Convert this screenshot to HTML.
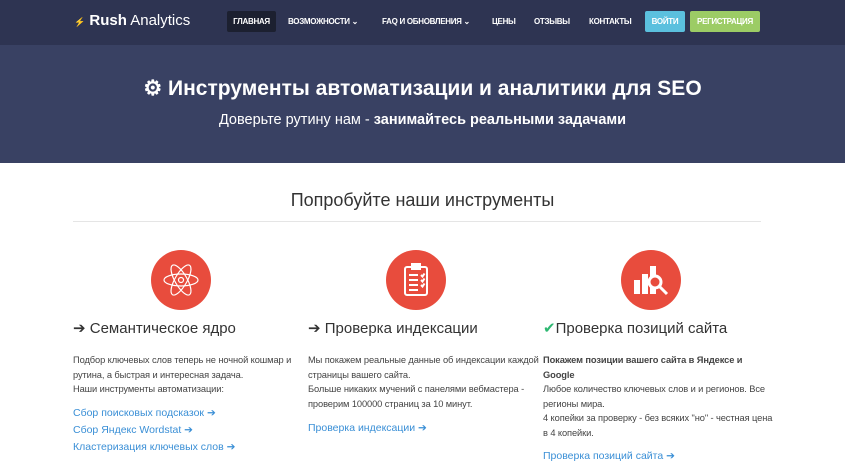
<!DOCTYPE html>
<html><head><meta charset="utf-8"><style>
*{margin:0;padding:0;box-sizing:border-box}
body{width:845px;height:466px;overflow:hidden;background:#fff;font-family:"Liberation Sans",sans-serif;color:#333;position:relative}
.nav{position:absolute;left:0;top:0;width:845px;height:45px;background:#2e3452}
.logo{position:absolute;left:74px;top:12px;color:#fff;font-size:15px}
.ni{position:absolute;top:11px;height:21px;line-height:21px;color:#fff;font-size:8px;font-weight:bold;padding:0 5px;letter-spacing:-0.3px;white-space:nowrap}
.hero{position:absolute;left:0;top:45px;width:845px;height:118px;background:#394163;color:#fff;text-align:center}
.hero h1{position:absolute;top:31px;width:100%;font-size:21px;font-weight:bold}
.hero p{position:absolute;top:67px;width:100%;font-size:14.5px}
.h2{position:absolute;top:190px;width:845px;text-align:center;font-size:18px;color:#333}
.hr{position:absolute;left:73px;top:221px;width:688px;height:1px;background:#e5e5e5}
.circ{position:absolute;top:250px;width:60px;height:60px;border-radius:50%;background:#e84c3d}
.t{position:absolute;top:319px;font-size:15px;color:#333;white-space:nowrap}
.tx{position:absolute;font-size:9.3px;line-height:14.5px;color:#444;width:234px;letter-spacing:-0.1px;white-space:nowrap}
.ln{position:absolute;font-size:10.5px;color:#3a8fd6;white-space:nowrap}
</style></head><body>
<div class="nav">
<div class="logo"><span style="font-size:9px;color:#aaa">⚡</span> <b>Rush</b> Analytics</div>
<div class="ni" style="left:227px;background:#1c2030;border-radius:2px;width:49px;text-align:center">ГЛАВНАЯ</div>
<div class="ni" style="left:283px">ВОЗМОЖНОСТИ ⌄</div>
<div class="ni" style="left:377px">FAQ И ОБНОВЛЕНИЯ ⌄</div>
<div class="ni" style="left:487px">ЦЕНЫ</div>
<div class="ni" style="left:529px">ОТЗЫВЫ</div>
<div class="ni" style="left:584px">КОНТАКТЫ</div>
<div class="ni" style="left:645px;background:#5bc0de;border-radius:2px;width:40px;text-align:center;padding:0">ВОЙТИ</div>
<div class="ni" style="left:690px;background:#9ccc65;border-radius:2px;width:70px;text-align:center;padding:0">РЕГИСТРАЦИЯ</div>
</div>
<div class="hero"><h1>⚙ Инструменты автоматизации и аналитики для SEO</h1>
<p>Доверьте рутину нам - <b>занимайтесь реальными задачами</b></p></div>
<div class="h2">Попробуйте наши инструменты</div>
<div class="hr"></div>

<div class="circ" style="left:151px"><svg width="60" height="60" viewBox="0 0 60 60" fill="none" stroke="#fff" stroke-width="1.2"><ellipse cx="30" cy="30" rx="17" ry="6"/><ellipse cx="30" cy="30" rx="17" ry="6" transform="rotate(60 30 30)"/><ellipse cx="30" cy="30" rx="17" ry="6" transform="rotate(-60 30 30)"/><circle cx="30" cy="30" r="2.5"/></svg></div>
<div class="circ" style="left:386px"><svg width="60" height="60" viewBox="0 0 60 60" fill="none" stroke="#fff" stroke-width="2"><rect x="19" y="17" width="22" height="28" rx="2"/><rect x="26" y="14" width="8" height="5" fill="#fff"/><path d="M23 25h9M23 30h9M23 35h9M23 40h9M35 25l1.5 1.5 2-3M35 30l1.5 1.5 2-3M35 35l1.5 1.5 2-3"/></svg></div>
<div class="circ" style="left:621px"><svg width="60" height="60" viewBox="0 0 60 60"><g fill="#fff"><rect x="13" y="30" width="6" height="14"/><rect x="21" y="24" width="6" height="20"/><rect x="29" y="16" width="6" height="28"/></g><circle cx="34" cy="32" r="6" fill="#e84c3d" stroke="#fff" stroke-width="3"/><path d="M38 36l8 8" stroke="#fff" stroke-width="3"/></svg></div>

<div class="t" style="left:73px">➔ Семантическое ядро</div>
<div class="t" style="left:308px">➔ Проверка индексации</div>
<div class="t" style="left:543px"><span style="color:#2eb872">✔</span>Проверка позиций сайта</div>

<div class="tx" style="left:73px;top:353px">Подбор ключевых слов теперь не ночной кошмар и<br>рутина, а быстрая и интересная задача.<br>Наши инструменты автоматизации:</div>
<div class="ln" style="left:73px;top:407px">Сбор поисковых подсказок ➔</div>
<div class="ln" style="left:73px;top:424px">Сбор Яндекс Wordstat ➔</div>
<div class="ln" style="left:73px;top:441px">Кластеризация ключевых слов ➔</div>

<div class="tx" style="left:308px;top:353px">Мы покажем реальные данные об индексации каждой<br>страницы вашего сайта.<br>Больше никаких мучений с панелями вебмастера -<br>проверим 100000 страниц за 10 минут.</div>
<div class="ln" style="left:308px;top:422px">Проверка индексации ➔</div>

<div class="tx" style="left:543px;top:353px"><b>Покажем позиции вашего сайта в Яндексе и<br>Google</b><br>Любое количество ключевых слов и и регионов. Все<br>регионы мира.<br>4 копейки за проверку - без всяких "но" - честная цена<br>в 4 копейки.</div>
<div class="ln" style="left:543px;top:450px">Проверка позиций сайта ➔</div>
</body></html>
